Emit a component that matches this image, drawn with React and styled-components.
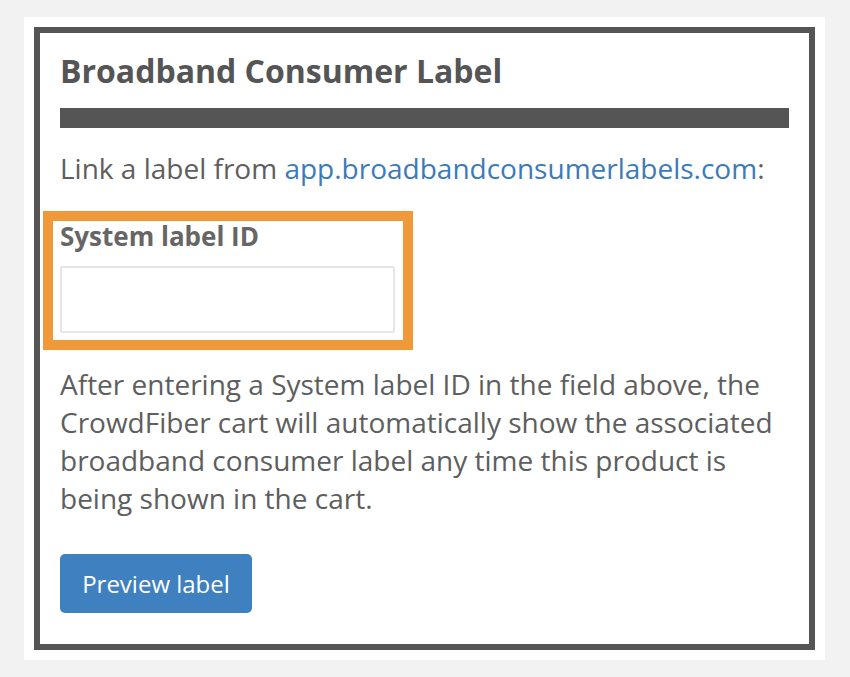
import React from "react";
import styled, { createGlobalStyle } from "styled-components";

const Global = createGlobalStyle`
  html, body { margin: 0; padding: 0; background: #f2f2f2; }
  body { font-family: "Open Sans", "Noto Sans", sans-serif; }
  * { box-sizing: border-box; }
`;

const Panel = styled.div`
  margin: 17px 0 0 24px;
  width: 801px;
  background: #ffffff;
  padding: 10px;
`;

const Box = styled.section`
  border: 6px solid #555555;
  padding: 0 20px 31px;
`;

const Title = styled.h2`
  margin: 19px 0 0;
  font-size: 32px;
  line-height: 38px;
  font-weight: 700;
  color: #555555;
`;

const Rule = styled.div`
  margin-top: 18px;
  height: 20px;
  background: #555555;
`;

const Lead = styled.p`
  margin: 21px 0 0;
  font-size: 28px;
  line-height: 38px;
  color: #5e5e5e;
`;

const Link = styled.a`
  color: #3d7ab8;
  text-decoration: none;
`;

const FormGroup = styled.div`
  margin: 34px 0 0 -7px;
  width: 350px;
  padding: 1px 7px 7px;
  outline: 10px solid #f0993a;
`;

const Label = styled.label`
  display: block;
  font-size: 26px;
  line-height: 28px;
  font-weight: 700;
  color: #666666;
`;

const Input = styled.input`
  display: block;
  margin-top: 16px;
  width: 335px;
  height: 67px;
  border: 2px solid #e6e6e6;
  border-radius: 2px;
  background: #fff;
  font: inherit;
  font-size: 24px;
  padding: 0 12px;
  outline: none;
`;

const Body = styled.p`
  margin: 25px 0 0;
  font-size: 28px;
  line-height: 38px;
  color: #5e5e5e;
`;

const Button = styled.button`
  display: block;
  margin-top: 37px;
  width: 192px;
  height: 59px;
  border: none;
  border-radius: 5px;
  background: #3f80c1;
  color: #ffffff;
  font-family: "Open Sans", "Noto Sans", sans-serif;
  font-size: 24px;
  cursor: pointer;
`;

export default function App() {
  return (
    <>
      <Global />
      <Panel>
        <Box>
          <Title>Broadband Consumer Label</Title>
          <Rule />
          <Lead>
            Link a label from <Link href="#">app.broadbandconsumerlabels.com</Link>:
          </Lead>
          <FormGroup>
            <Label htmlFor="sysid">System label ID</Label>
            <Input id="sysid" type="text" />
          </FormGroup>
          <Body>
            After entering a System label ID in the field above, the CrowdFiber cart will
            automatically show the associated broadband consumer label any time this product is
            being shown in the cart.
          </Body>
          <Button type="button">Preview label</Button>
        </Box>
      </Panel>
    </>
  );
}
